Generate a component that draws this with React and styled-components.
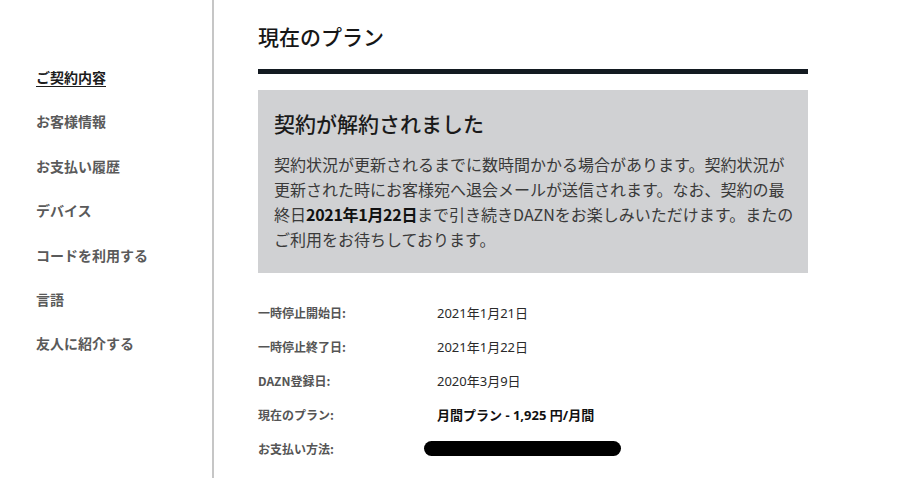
import React from "react";
import styled, { createGlobalStyle } from "styled-components";

const Global = createGlobalStyle`
  html, body { margin: 0; padding: 0; background: #fff; }
  body { font-family: "Noto Sans", "Noto Sans CJK JP", sans-serif; }
  * { box-sizing: border-box; }
`;

const Page = styled.div`
  display: flex;
  width: 900px;
  height: 478px;
  overflow: hidden;
`;

const Sidebar = styled.nav`
  width: 214px;
  flex: none;
  border-right: 2px solid #c6c6c6;
  padding: 56px 0 0 36px;
  display: flex;
  flex-direction: column;
`;

const NavItem = styled.a`
  display: block;
  height: 44.4px;
  line-height: 42px;
  font-family: "Noto Sans CJK JP", sans-serif;
  font-size: 14px;
  font-weight: 700;
  color: ${(p) => (p.$active ? "#1d1d1d" : "#5a5a5a")};
  text-decoration: ${(p) => (p.$active ? "underline" : "none")};
  text-underline-offset: 3px;
`;

const Main = styled.main`
  flex: 1;
  padding: 20px 0 0 44px;
`;

const Content = styled.div`
  width: 550px;
`;

const Title = styled.h1`
  margin: 0;
  font-family: "Noto Sans CJK JP", sans-serif;
  font-size: 21px;
  font-weight: 500;
  line-height: 32px;
  color: #161616;
`;

const Rule = styled.div`
  height: 5px;
  background: #131a21;
  margin-top: 17px;
`;

const Notice = styled.section`
  margin-top: 16px;
  background: #d0d1d3;
  padding: 17px 0 21px 16px;
`;

const NoticeTitle = styled.h2`
  margin: 0;
  font-family: "Noto Sans CJK JP", sans-serif;
  font-size: 21px;
  font-weight: 500;
  line-height: 32px;
  color: #1a1a1a;
`;

const NoticeText = styled.p`
  margin: 13px 0 0 0;
  font-family: "Noto Sans CJK JP", sans-serif;
  font-size: 16px;
  line-height: 25px;
  color: #3a3a3a;
  white-space: nowrap;
  b {
    color: #111;
    letter-spacing: -0.3px;
  }
`;

const Details = styled.dl`
  margin: 22px 0 0 0;
  display: grid;
  grid-template-columns: 179px 1fr;
  grid-auto-rows: 34px;
  align-items: center;
`;

const Label = styled.dt`
  font-family: "Noto Sans CJK JP", sans-serif;
  font-size: 12px;
  font-weight: 700;
  color: #555;
`;

const Value = styled.dd`
  margin: 0;
  font-family: "Noto Sans", "Noto Sans CJK JP", sans-serif;
  font-size: 13px;
  font-weight: ${(p) => (p.$bold ? 700 : 400)};
  color: ${(p) => (p.$bold ? "#111" : "#2a2a2a")};
`;

const Redacted = styled.span`
  display: block;
  width: 197px;
  height: 15px;
  border-radius: 8px;
  background: #000;
  margin-left: -13px;
`;

const navItems = [
  "ご契約内容",
  "お客様情報",
  "お支払い履歴",
  "デバイス",
  "コードを利用する",
  "言語",
  "友人に紹介する",
];

export default function App() {
  return (
    <>
      <Global />
      <Page>
        <Sidebar>
          {navItems.map((t, i) => (
            <NavItem key={t} $active={i === 0}>
              {t}
            </NavItem>
          ))}
        </Sidebar>
        <Main>
          <Content>
            <Title>現在のプラン</Title>
            <Rule />
            <Notice>
              <NoticeTitle>契約が解約されました</NoticeTitle>
              <NoticeText>
                契約状況が更新されるまでに数時間かかる場合があります。契約状況が
                <br />
                更新された時にお客様宛へ退会メールが送信されます。なお、契約の最
                <br />
                終日<b>2021年1月22日</b>まで引き続きDAZNをお楽しみいただけます。またの
                <br />
                ご利用をお待ちしております。
              </NoticeText>
            </Notice>
            <Details>
              <Label>一時停止開始日:</Label>
              <Value>2021年1月21日</Value>
              <Label>一時停止終了日:</Label>
              <Value>2021年1月22日</Value>
              <Label>DAZN登録日:</Label>
              <Value>2020年3月9日</Value>
              <Label>現在のプラン:</Label>
              <Value $bold>月間プラン - 1,925 円/月間</Value>
              <Label>お支払い方法:</Label>
              <Value>
                <Redacted />
              </Value>
            </Details>
          </Content>
        </Main>
      </Page>
    </>
  );
}
